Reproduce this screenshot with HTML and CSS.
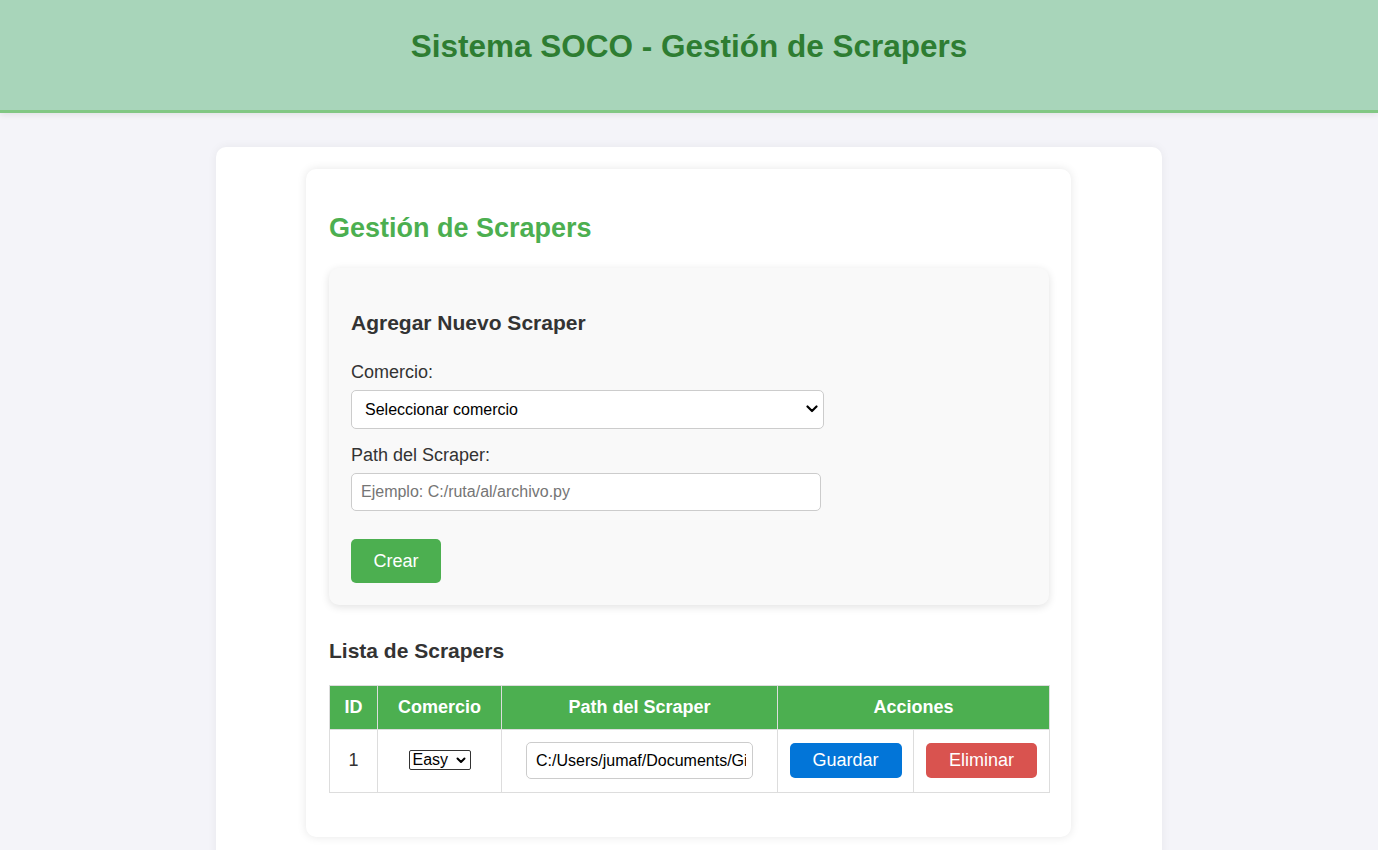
FILE: index.html
```html
<!DOCTYPE html>
<html lang="es">
<head>
<meta charset="utf-8">
<title>Sistema SOCO - Gestión de Scrapers</title>
<link rel="stylesheet" href="styles.css">
</head>
<body>
<header class="topbar">
  <h1 class="topbar-title">Sistema SOCO - Gestión de Scrapers</h1>
</header>
<main class="container">
  <section class="card">
    <h2 class="card-title">Gestión de Scrapers</h2>
    <div class="form-box">
      <h3 class="form-title">Agregar Nuevo Scraper</h3>
      <label class="field-label">Comercio:</label>
      <div class="select-wrap select-main">
        <select class="select-field">
          <option>Seleccionar comercio</option>
        </select>
        <svg class="chevron" width="12" height="8" viewBox="0 0 12 8"><path d="M1.5 1.5 L6 6 L10.5 1.5" fill="none" stroke="#000" stroke-width="2.2" stroke-linecap="round" stroke-linejoin="round"/></svg>
      </div>
      <label class="field-label">Path del Scraper:</label>
      <input class="text-field" type="text" placeholder="Ejemplo: C:/ruta/al/archivo.py">
      <button class="btn btn-green">Crear</button>
    </div>

    <h3 class="list-title">Lista de Scrapers</h3>
    <table class="table">
      <colgroup>
        <col class="c-id"><col class="c-com"><col class="c-path"><col class="c-act"><col class="c-act">
      </colgroup>
      <thead>
        <tr><th>ID</th><th>Comercio</th><th>Path del Scraper</th><th colspan="2">Acciones</th></tr>
      </thead>
      <tbody>
        <tr>
          <td>1</td>
          <td>
            <span class="select-wrap select-small">
              <select class="mini-select"><option>Easy</option></select>
              <svg class="chevron-small" width="10" height="7" viewBox="0 0 10 7"><path d="M1.5 1.5 L5 5 L8.5 1.5" fill="none" stroke="#000" stroke-width="2" stroke-linecap="round" stroke-linejoin="round"/></svg>
            </span>
          </td>
          <td><input class="path-field" type="text" value="C:/Users/jumaf/Documents/GitHub/soco/scrapers/easy.py"></td>
          <td><button class="btn btn-blue">Guardar</button></td>
          <td><button class="btn btn-red">Eliminar</button></td>
        </tr>
      </tbody>
    </table>
  </section>
</main>
</body>
</html>
```
FILE: styles.css
```css
* { box-sizing: border-box; }

body {
  margin: 0;
  background: #f4f4f9;
  font-family: "Liberation Sans", Arial, sans-serif;
  font-size: 18px;
  color: #333;
}

.topbar {
  height: 113px;
  background: #a8d5ba;
  border-bottom: 3px solid #81c784;
  box-shadow: 0 2px 6px rgba(0,0,0,0.08);
  padding-top: 28px;
  text-align: center;
}

.topbar-title {
  margin: 0;
  font-size: 31.5px;
  line-height: 37px;
  font-weight: bold;
  color: #2e7d32;
}

.container {
  width: 946px;
  margin: 34px auto 0;
  background: #fff;
  border-radius: 10px;
  box-shadow: 0 0 10px rgba(0,0,0,0.06);
  padding: 22px 0 30px 90px;
}

.card {
  width: 765px;
  background: #fff;
  border-radius: 10px;
  box-shadow: 0 0 10px rgba(0,0,0,0.1);
  padding: 22px 22px 22px 23px;
}

.card-title {
  margin: 22px 0 24px;
  font-size: 27px;
  line-height: 31px;
  color: #4caf50;
}

.form-box {
  background: #f9f9f9;
  border-radius: 10px;
  box-shadow: 0 2px 8px rgba(0,0,0,0.12);
  padding: 22px;
}

.form-title {
  margin: 21px 0 27px;
  font-size: 21px;
  line-height: 24px;
  color: #333;
}

.field-label {
  display: block;
  line-height: 21px;
  margin-bottom: 7px;
  color: #333;
}

.select-wrap {
  position: relative;
  display: inline-block;
}

.select-main {
  display: block;
  width: 473px;
  margin-bottom: 16px;
}

.select-field {
  appearance: none;
  -webkit-appearance: none;
  width: 473px;
  height: 39px;
  padding: 0 30px 0 13px;
  font-family: "Liberation Sans", Arial, sans-serif;
  font-size: 16px;
  color: #000;
  background: #fff;
  border: 1px solid #ccc;
  border-radius: 5px;
}

.chevron {
  position: absolute;
  right: 6px;
  top: 15px;
}

.text-field {
  display: block;
  width: 470px;
  height: 38px;
  padding: 0 9px;
  font-family: "Liberation Sans", Arial, sans-serif;
  font-size: 16px;
  color: #000;
  background: #fff;
  border: 1px solid #ccc;
  border-radius: 5px;
}

.text-field::placeholder { color: #757575; }

.btn {
  border: none;
  border-radius: 5px;
  color: #fff;
  font-family: "Liberation Sans", Arial, sans-serif;
  font-size: 18px;
  line-height: 21px;
  cursor: pointer;
}

.btn-green {
  display: block;
  margin-top: 28px;
  width: 90px;
  height: 44px;
  padding: 0;
  background: #4caf50;
}

.list-title {
  margin: 34px 0 22px;
  font-size: 21px;
  line-height: 24px;
  color: #333;
}

.table {
  width: 720px;
  table-layout: fixed;
  border-collapse: collapse;
  margin-bottom: 22px;
}

.c-id { width: 48px; }
.c-com { width: 124px; }
.c-path { width: 276px; }
.c-act { width: 136px; }

.table th {
  background: #4caf50;
  color: #fff;
  font-weight: bold;
  line-height: 21px;
  padding: 11px 4px;
  border: 1px solid #ddd;
  text-align: center;
}

.table td {
  border: 1px solid #ddd;
  padding: 12px 0 13px;
  text-align: center;
  line-height: 21px;
}

.select-small {
  vertical-align: middle;
}

.mini-select {
  appearance: none;
  -webkit-appearance: none;
  width: 62px;
  height: 20px;
  padding: 0 18px 0 3px;
  font-family: "Liberation Sans", Arial, sans-serif;
  font-size: 16px;
  line-height: 18px;
  color: #000;
  background: #fff;
  border: 1px solid #333;
  border-radius: 2px;
  vertical-align: top;
}

.chevron-small {
  position: absolute;
  right: 5px;
  top: 7px;
}

.path-field {
  width: 227px;
  height: 37px;
  padding: 0 6px 0 9px;
  font-family: "Liberation Sans", Arial, sans-serif;
  font-size: 16px;
  color: #000;
  background: #fff;
  border: 1px solid #ccc;
  border-radius: 5px;
  vertical-align: middle;
}

.btn-blue {
  width: 112px;
  height: 35px;
  padding: 0;
  background: #0275d8;
  vertical-align: middle;
}

.btn-red {
  width: 111px;
  height: 35px;
  padding: 0;
  background: #d9534f;
  vertical-align: middle;
}
```
